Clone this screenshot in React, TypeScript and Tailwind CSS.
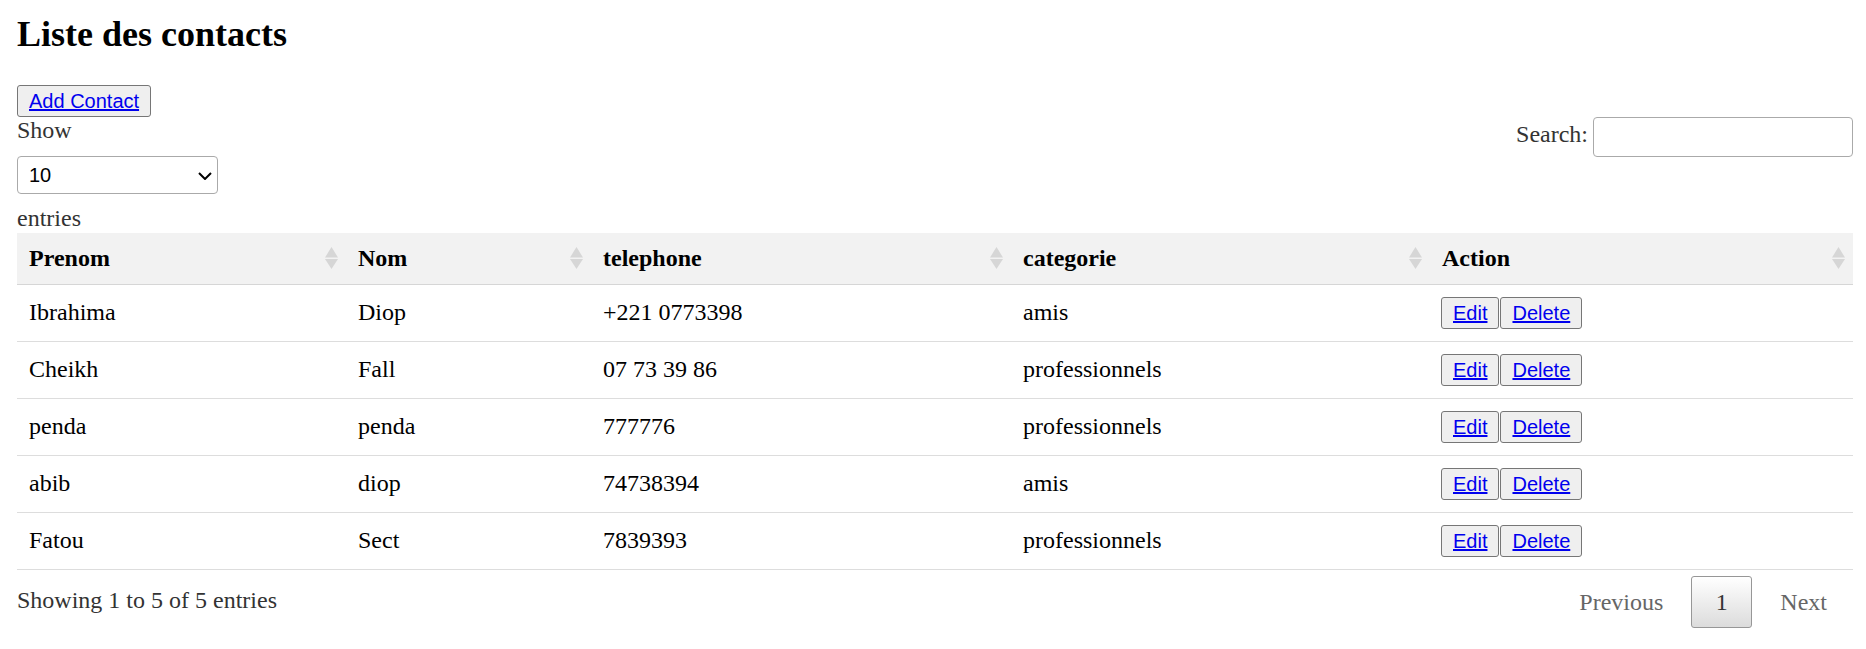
import React from 'react'

interface Contact {
  prenom: string
  nom: string
  telephone: string
  categorie: string
}

const contacts: Contact[] = [
  { prenom: 'Ibrahima', nom: 'Diop', telephone: '+221 0773398', categorie: 'amis' },
  { prenom: 'Cheikh', nom: 'Fall', telephone: '07 73 39 86', categorie: 'professionnels' },
  { prenom: 'penda', nom: 'penda', telephone: '777776', categorie: 'professionnels' },
  { prenom: 'abib', nom: 'diop', telephone: '74738394', categorie: 'amis' },
  { prenom: 'Fatou', nom: 'Sect', telephone: '7839393', categorie: 'professionnels' },
]

const columns = ['Prenom', 'Nom', 'telephone', 'categorie', 'Action']

function SortIcon() {
  return (
    <svg
      width="13"
      height="22"
      viewBox="0 0 13 22"
      className="absolute right-[8px] top-1/2 -translate-y-1/2"
    >
      <polygon points="6.5,0 13,10.5 0,10.5" fill="#d6d6d6" />
      <polygon points="0,12 13,12 6.5,22" fill="#d6d6d6" />
    </svg>
  )
}

function LinkButton({ label }: { label: string }) {
  return (
    <button className="h-[32px] px-[11px] flex items-center bg-[#efefef] border border-[#767676] rounded-[3px] text-[20px] font-['Liberation_Sans',Arial,sans-serif]">
      <a href="#" className="text-[#0000ee] underline">{label}</a>
    </button>
  )
}

export default function App() {
  return (
    <div className="min-h-screen bg-white pl-[17px] pr-[13px] pt-[14px] text-black font-['Liberation_Serif','Times_New_Roman',serif]">
      <h2 className="text-[36px] font-bold leading-[40px]">Liste des contacts</h2>

      <div className="mt-[31px] flex">
        <button className="h-[32px] px-[11px] flex items-center bg-[#efefef] border border-[#767676] rounded-[3px] text-[20px] font-['Liberation_Sans',Arial,sans-serif]">
          <a href="#" className="text-[#0000ee] underline">Add Contact</a>
        </button>
      </div>

      {/* longueur + recherche */}
      <div className="flex justify-between items-start text-[24px] text-[#333]">
        <div>
          <div className="leading-[27px]">Show</div>
          <div className="relative mt-[12px] w-[201px]">
            <select className="appearance-none w-[201px] h-[38px] pl-[11px] border border-[#aaa] rounded-[4px] bg-white text-black text-[20px] font-['Liberation_Sans',Arial,sans-serif]">
              <option>10</option>
              <option>25</option>
              <option>50</option>
              <option>100</option>
            </select>
            <svg width="14" height="8" viewBox="0 0 14 8" className="absolute right-[6px] top-[16px] pointer-events-none">
              <polyline points="1,1 7,7 13,1" fill="none" stroke="#000" strokeWidth="2" />
            </svg>
          </div>
          <div className="mt-[11px] leading-[27px]">entries</div>
        </div>
        <div className="flex items-start">
          <span className="mt-[4px] leading-[27px]">Search:</span>
          <input className="ml-[5px] w-[260px] h-[40px] border border-[#aaa] rounded-[4px] px-[6px] bg-transparent" />
        </div>
      </div>

      <table className="mt-[1px] w-full table-fixed text-[24px]">
        <colgroup>
          <col className="w-[329px]" />
          <col className="w-[245px]" />
          <col className="w-[420px]" />
          <col className="w-[419px]" />
          <col className="w-[423px]" />
        </colgroup>
        <thead>
          <tr className="h-[51px] bg-[#f2f2f2] border-b border-[#d6d6d6]">
            {columns.map((c) => (
              <th key={c} className="relative text-left font-bold pl-[12px] leading-[27px]">
                {c}
                <SortIcon />
              </th>
            ))}
          </tr>
        </thead>
        <tbody>
          {contacts.map((c) => (
            <tr key={c.prenom} className="h-[57px] border-b border-[#ddd]">
              <td className="pl-[12px] leading-[27px]">{c.prenom}</td>
              <td className="pl-[12px] leading-[27px]">{c.nom}</td>
              <td className="pl-[12px] leading-[27px]">{c.telephone}</td>
              <td className="pl-[12px] leading-[27px]">{c.categorie}</td>
              <td className="pl-[11px]">
                <div className="flex gap-[1px]">
                  <LinkButton label="Edit" />
                  <LinkButton label="Delete" />
                </div>
              </td>
            </tr>
          ))}
        </tbody>
      </table>

      {/* pied */}
      <div className="flex justify-between items-start text-[24px] text-[#333]">
        <div className="pt-[17px] leading-[27px]">Showing 1 to 5 of 5 entries</div>
        <div className="pt-[6px] flex">
          <span className="h-[52px] px-[25px] flex items-center text-[#666] border border-transparent">Previous</span>
          <span className="ml-[2px] h-[52px] w-[61px] flex items-center justify-center border border-[#979797] rounded-[3px] bg-gradient-to-b from-white to-[#dcdcdc] text-[#333]">1</span>
          <span className="ml-[2px] h-[52px] px-[25px] flex items-center text-[#666] border border-transparent">Next</span>
        </div>
      </div>
    </div>
  )
}
